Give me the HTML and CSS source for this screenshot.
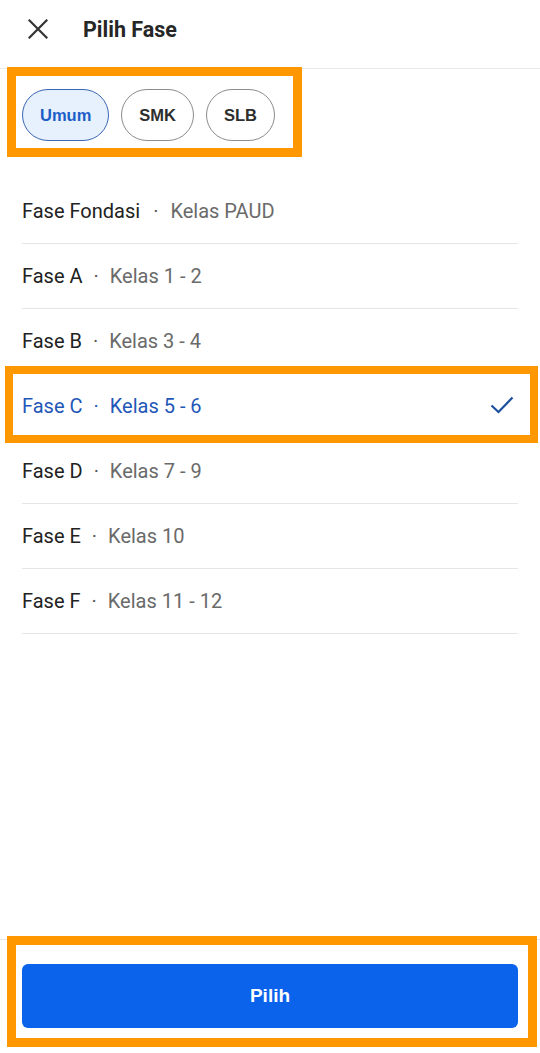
FILE: index.html
```html
<!DOCTYPE html>
<html lang="id">
<head>
<meta charset="utf-8">
<meta name="viewport" content="width=540">
<title>Pilih Fase</title>
<link rel="stylesheet" href="styles.css">
</head>
<body>
<div class="screen">
  <header class="topbar">
    <button class="close" aria-label="Tutup">
      <svg width="20" height="20" viewBox="0 0 20 20"><path d="M1.5 1.5L18.5 18.5M18.5 1.5L1.5 18.5" stroke="#333" stroke-width="2.2" stroke-linecap="square" fill="none"/></svg>
    </button>
    <h1 class="title">Pilih Fase</h1>
  </header>

  <div class="chips">
    <button class="chip chip-active">Umum</button>
    <button class="chip">SMK</button>
    <button class="chip">SLB</button>
  </div>

  <ul class="phase-list">
    <li class="phase"><span class="name">Fase Fondasi</span><span class="dot dot-wide">·</span><span class="grade">Kelas PAUD</span></li>
    <li class="phase"><span class="name">Fase A</span><span class="dot">·</span><span class="grade">Kelas 1 - 2</span></li>
    <li class="phase"><span class="name">Fase B</span><span class="dot">·</span><span class="grade">Kelas 3 - 4</span></li>
    <li class="phase phase-selected"><span class="name">Fase C</span><span class="dot">·</span><span class="grade">Kelas 5 - 6</span>
      <svg class="check" width="24" height="18" viewBox="0 0 24 18"><path d="M1.5 9.5L8.5 16L22.5 1.5" stroke="#1d4f9e" stroke-width="2.2" fill="none"/></svg>
    </li>
    <li class="phase"><span class="name">Fase D</span><span class="dot">·</span><span class="grade">Kelas 7 - 9</span></li>
    <li class="phase"><span class="name">Fase E</span><span class="dot">·</span><span class="grade">Kelas 10</span></li>
    <li class="phase"><span class="name">Fase F</span><span class="dot">·</span><span class="grade">Kelas 11 - 12</span></li>
  </ul>

  <footer class="actions">
    <button class="primary">Pilih</button>
  </footer>

  <div class="highlight hl-chips"></div>
  <div class="highlight hl-selected"></div>
  <div class="highlight hl-button"></div>
</div>
</body>
</html>
```

FILE: styles.css
```css
* { box-sizing: border-box; }

html, body {
  margin: 0;
  padding: 0;
  background: #ffffff;
}

body {
  font-family: Roboto, "Liberation Sans", Arial, sans-serif;
  color: #222222;
}

.screen {
  position: relative;
  width: 540px;
  height: 1053px;
  display: flex;
  flex-direction: column;
  overflow: hidden;
}

.topbar {
  height: 69px;
  padding: 0 0 10px 28px;
  display: flex;
  align-items: center;
  border-bottom: 1px solid #e8e8e8;
}

.close {
  border: 0;
  background: none;
  padding: 0;
  width: 20px;
  height: 20px;
  display: flex;
}

.title {
  margin: 0 0 0 35px;
  font-size: 21.5px;
  font-weight: 700;
  color: #262626;
}

.chips {
  display: flex;
  gap: 12px;
  padding: 20px 22px 0;
}

.chip {
  height: 52px;
  padding: 0 17px;
  border-radius: 26px;
  border: 1px solid #8c8c8c;
  background: #ffffff;
  font-family: "Liberation Sans", Arial, sans-serif;
  font-weight: 700;
  font-size: 16.5px;
  color: #2e2e2e;
}

.chip-active {
  background: #e6f1fd;
  border-color: #3a66b4;
  color: #1c5ec7;
}

.phase-list {
  list-style: none;
  margin: 38px 0 0;
  padding: 0 22px;
}

.phase {
  height: 65px;
  display: flex;
  align-items: center;
  border-bottom: 1px solid #e6e6e6;
  font-size: 20px;
}

.name { color: #222222; }
.dot { color: #555555; margin: 0 11px; }
.dot-wide { margin: 0 12px 0 13px; }
.grade { color: #6a6a6a; }

.phase-selected .name,
.phase-selected .dot,
.phase-selected .grade { color: #1f57b8; }

.check {
  margin-left: auto;
  margin-right: 4px;
  margin-bottom: 2px;
}

.actions {
  margin-top: auto;
  border-top: 1px solid #e6e6e6;
  padding: 24px 22px 25px;
}

.primary {
  width: 100%;
  height: 64px;
  border: 0;
  border-radius: 6px;
  background: #0b62eb;
  color: #ffffff;
  font-family: "Liberation Sans", Arial, sans-serif;
  font-weight: 700;
  font-size: 19px;
}

.highlight {
  position: absolute;
  border: 9px solid #ff9800;
  pointer-events: none;
}

.hl-chips {
  left: 7px;
  top: 67px;
  width: 295px;
  height: 90px;
}

.hl-selected {
  left: 5px;
  top: 366px;
  width: 533px;
  height: 77px;
  border-width: 8px;
}

.hl-button {
  left: 7px;
  top: 936px;
  width: 530px;
  height: 111px;
}
```
